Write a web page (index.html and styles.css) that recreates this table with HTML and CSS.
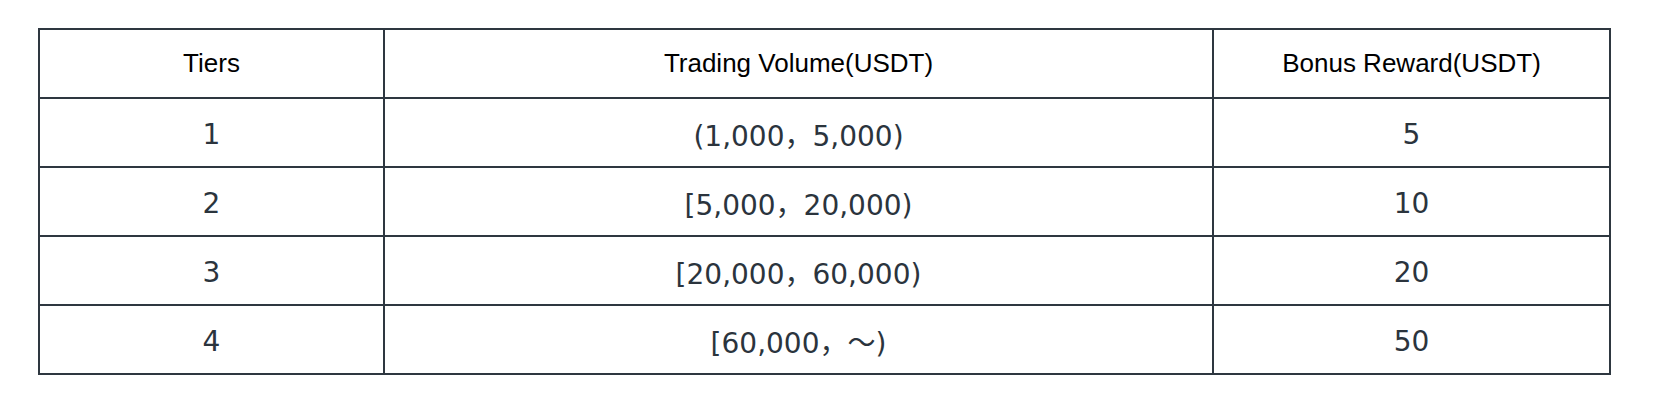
FILE: index.html
```html
<!DOCTYPE html>
<html lang="en">
<head>
<meta charset="utf-8">
<title>Tiers</title>
<link rel="stylesheet" href="styles.css">
</head>
<body>
<div class="wrap">
  <table class="tiers">
    <colgroup>
      <col class="c1">
      <col class="c2">
      <col class="c3">
    </colgroup>
    <thead>
      <tr><th>Tiers</th><th>Trading Volume(USDT)</th><th>Bonus Reward(USDT)</th></tr>
    </thead>
    <tbody>
      <tr><td>1</td><td>(1,000，5,000)</td><td>5</td></tr>
      <tr><td>2</td><td>[5,000，20,000)</td><td>10</td></tr>
      <tr><td>3</td><td>[20,000，60,000)</td><td>20</td></tr>
      <tr><td>4</td><td>[60,000，～)</td><td>50</td></tr>
    </tbody>
  </table>
</div>
</body>
</html>
```

FILE: styles.css
```css
html, body {
  margin: 0;
  padding: 0;
  background: #ffffff;
}

.wrap {
  padding: 28px 45px 0 38px;
}

.tiers {
  border-collapse: separate;
  border-spacing: 0;
  table-layout: fixed;
  width: 1573px;
  border-right: 2px solid #2e3740;
  border-bottom: 2px solid #2e3740;
}

.c1 { width: 345px; }
.c2 { width: 829px; }
.c3 { width: 397px; }

.tiers th,
.tiers td {
  border-left: 2px solid #2e3740;
  border-top: 2px solid #2e3740;
  height: 69px;
  padding: 0;
  text-align: center;
  vertical-align: middle;
  box-sizing: border-box;
}

.tiers th {
  font-family: "Liberation Sans", Arial, sans-serif;
  font-weight: normal;
  font-size: 26px;
  color: #000000;
}

.tiers td {
  font-family: "DejaVu Sans", Verdana, "Noto Sans CJK SC", sans-serif;
  font-size: 28px;
  color: #2b343d;
  padding-top: 3px;
}
```
